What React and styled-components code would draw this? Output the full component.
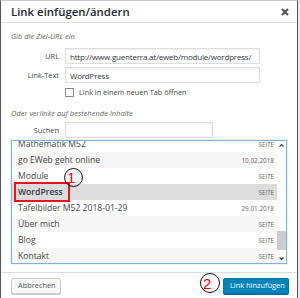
import React from "react";
import styled, { createGlobalStyle } from "styled-components";

const Global = createGlobalStyle`
  html, body { margin: 0; padding: 0; background: #e9e9e9; }
  body { font-family: "Open Sans", "Noto Sans", sans-serif; }
  * { box-sizing: border-box; }
`;

const Dialog = styled.div`
  width: 298px;
  height: 298px;
  background: #fff;
  border-left: 1px solid #555;
  border-right: 1px solid #555;
  border-top: 1px solid #c8c8c8;
  display: flex;
  flex-direction: column;
  color: #555;
`;

const Header = styled.div`
  height: 22px;
  flex: none;
  border-bottom: 1px solid #ddd;
  display: flex;
  align-items: center;
  justify-content: space-between;
  padding: 0 8px 0 10px;
`;

const Title = styled.h1`
  margin: 0;
  font-size: 11.4px;
  font-weight: 600;
  color: #23282d;
  line-height: 1;
`;

const Close = styled.svg`
  width: 8px;
  height: 8px;
  display: block;
`;

const Body = styled.div`
  flex: 1;
  padding: 0 10px;
  display: flex;
  flex-direction: column;
`;

const Hint = styled.p`
  margin: ${(p) => p.$top}px 0 0;
  font-size: 7.5px;
  font-style: italic;
  color: #666;
  line-height: 12px;
  height: 12px;
`;

const Field = styled.div`
  display: grid;
  grid-template-columns: 48px auto;
  justify-content: start;
  column-gap: 6px;
  align-items: center;
  margin-top: ${(p) => p.$top}px;
  height: 16px;
`;

const Label = styled.label`
  text-align: right;
  font-size: 7.4px;
  color: #444;
  line-height: 16px;
`;

const Input = styled.div`
  width: ${(p) => p.$w}px;
  height: 16px;
  border: 1px solid #ddd;
  box-shadow: inset 0 1px 2px rgba(0,0,0,0.07);
  font-size: 8px;
  letter-spacing: -0.2px;
  color: #32373c;
  padding: 0 4px;
  display: flex;
  align-items: center;
  white-space: nowrap;
  overflow: hidden;
`;

const CheckRow = styled.div`
  display: flex;
  align-items: center;
  gap: 5px;
  height: 10px;
  margin: 4px 0 0 54px;
  font-size: 7.3px;
  color: #444;
`;

const Box = styled.span`
  width: 9px;
  height: 9px;
  border: 1px solid #8a8a8a;
  background: #fff;
  display: block;
`;

const List = styled.div`
  margin-top: 2px;
  height: 124px;
  flex: none;
  border: 1px solid #7fb1de;
  box-shadow: 0 0 1px rgba(30,140,190,0.6);
  position: relative;
  overflow: hidden;
  display: flex;
`;

const Rows = styled.ul`
  list-style: none;
  margin: -5px 0 0;
  padding: 0;
  flex: 1;
`;

const Row = styled.li`
  height: 16px;
  display: flex;
  align-items: center;
  justify-content: space-between;
  padding: 0 3px 0 6px;
  background: ${(p) => (p.$sel ? "#dcdcdc" : p.$alt ? "#f6f6f6" : "#fff")};
  font-size: 8.6px;
  color: ${(p) => (p.$sel ? "#32373c" : "#444")};
  font-weight: ${(p) => (p.$sel ? 600 : 400)};
`;

const Meta = styled.span`
  font-size: ${(p) => (p.$caps ? 6.2 : 6.4)}px;
  color: #666;
  font-weight: 400;
  text-transform: ${(p) => (p.$caps ? "uppercase" : "none")};
`;

const Scroll = styled.div`
  width: 9px;
  flex: none;
  background: #fff;
  display: flex;
  flex-direction: column;
  align-items: center;
`;

const Arrow = styled.svg`
  width: 9px;
  height: 9px;
  flex: none;
  display: block;
`;

const Track = styled.div`
  flex: 1;
  width: 100%;
  display: flex;
  flex-direction: column;
  justify-content: flex-end;
  padding-bottom: 4px;
`;

const Thumb = styled.div`
  height: 19px;
  width: 100%;
  background: #cdcdcd;
`;

const Footer = styled.div`
  height: 26px;
  flex: none;
  border-top: 1px solid #ddd;
  display: flex;
  align-items: center;
  justify-content: space-between;
  padding: 0 8px 0 10px;
  position: relative;
`;

const Button = styled.button`
  height: 16px;
  padding: 0 6px;
  font-family: inherit;
  font-size: 7.4px;
  white-space: nowrap;
  border-radius: 2px;
  border: 1px solid ${(p) => (p.$primary ? "#0073aa" : "#ccc")};
  background: ${(p) => (p.$primary ? "#0085ba" : "#f7f7f7")};
  color: ${(p) => (p.$primary ? "#fff" : "#555")};
  box-shadow: 0 1px 0 ${(p) => (p.$primary ? "#006799" : "#ccc")};
  line-height: 1;
  width: ${(p) => p.$w}px;
`;

const Marker = styled.div`
  position: absolute;
  left: ${(p) => p.$x}px;
  top: ${(p) => p.$y}px;
  width: ${(p) => p.$d}px;
  height: ${(p) => p.$d}px;
  border: 1.5px solid #111;
  border-radius: 50%;
  color: #e00;
  font-family: "Liberation Sans", Arial, sans-serif;
  font-size: 15px;
  line-height: 1;
  display: flex;
  align-items: center;
  padding-left: 2px;
  z-index: 2;
`;

const Highlight = styled.div`
  position: absolute;
  left: 2px;
  top: 41px;
  width: 56px;
  height: 20px;
  border: 2px solid #e8141c;
  z-index: 2;
`;

const rows = [
  { t: "Mathematik M52", m: "Seite" },
  { t: "go EWeb geht online", m: "10.02.2018", alt: true },
  { t: "Module", m: "Seite" },
  { t: "WordPress", m: "Seite", sel: true },
  { t: "Tafelbilder M52 2018-01-29", m: "29.01.2018" },
  { t: "Über mich", m: "Seite", alt: true },
  { t: "Blog", m: "Seite" },
  { t: "Kontakt", m: "Seite", alt: true },
];

export default function App() {
  return (
    <>
      <Global />
      <Dialog>
        <Header>
          <Title>Link einfügen/ändern</Title>
          <Close viewBox="0 0 8 8">
            <path d="M1 1 L7 7 M7 1 L1 7" stroke="#555" strokeWidth="2.2" />
          </Close>
        </Header>
        <Body>
          <Hint $top={7}>Gib die Ziel-URL ein</Hint>
          <Field $top={6}>
            <Label>URL</Label>
            <Input $w={195}>http://www.guenterra.at/eweb/module/wordpress/</Input>
          </Field>
          <Field $top={3}>
            <Label>Link-Text</Label>
            <Input $w={195}>WordPress</Input>
          </Field>
          <CheckRow>
            <Box />
            <span>Link in einem neuen Tab öffnen</span>
          </CheckRow>
          <Hint $top={10}>Oder verlinke auf bestehende Inhalte</Hint>
          <Field $top={3}>
            <Label>Suchen</Label>
            <Input $w={148} />
          </Field>
          <List>
            <Rows>
              {rows.map((r) => (
                <Row key={r.t} $alt={r.alt} $sel={r.sel}>
                  <span>{r.t}</span>
                  <Meta $caps={r.m === "Seite"}>{r.m}</Meta>
                </Row>
              ))}
            </Rows>
            <Scroll>
              <Arrow viewBox="0 0 9 9">
                <path d="M2.5 5.5 L4.5 3.5 L6.5 5.5" stroke="#444" strokeWidth="1.2" fill="none" />
              </Arrow>
              <Track>
                <Thumb />
              </Track>
              <Arrow viewBox="0 0 9 9">
                <path d="M2.5 3.5 L4.5 5.5 L6.5 3.5" stroke="#444" strokeWidth="1.2" fill="none" />
              </Arrow>
            </Scroll>
            <Highlight />
            <Marker $x={52} $y={27} $d={19}>1</Marker>
          </List>
        </Body>
        <Footer>
          <Button $w={50}>Abbrechen</Button>
          <Button $primary $w={66}>Link hinzufügen</Button>
          <Marker $x={199} $y={0} $d={20}>2</Marker>
        </Footer>
      </Dialog>
    </>
  );
}
